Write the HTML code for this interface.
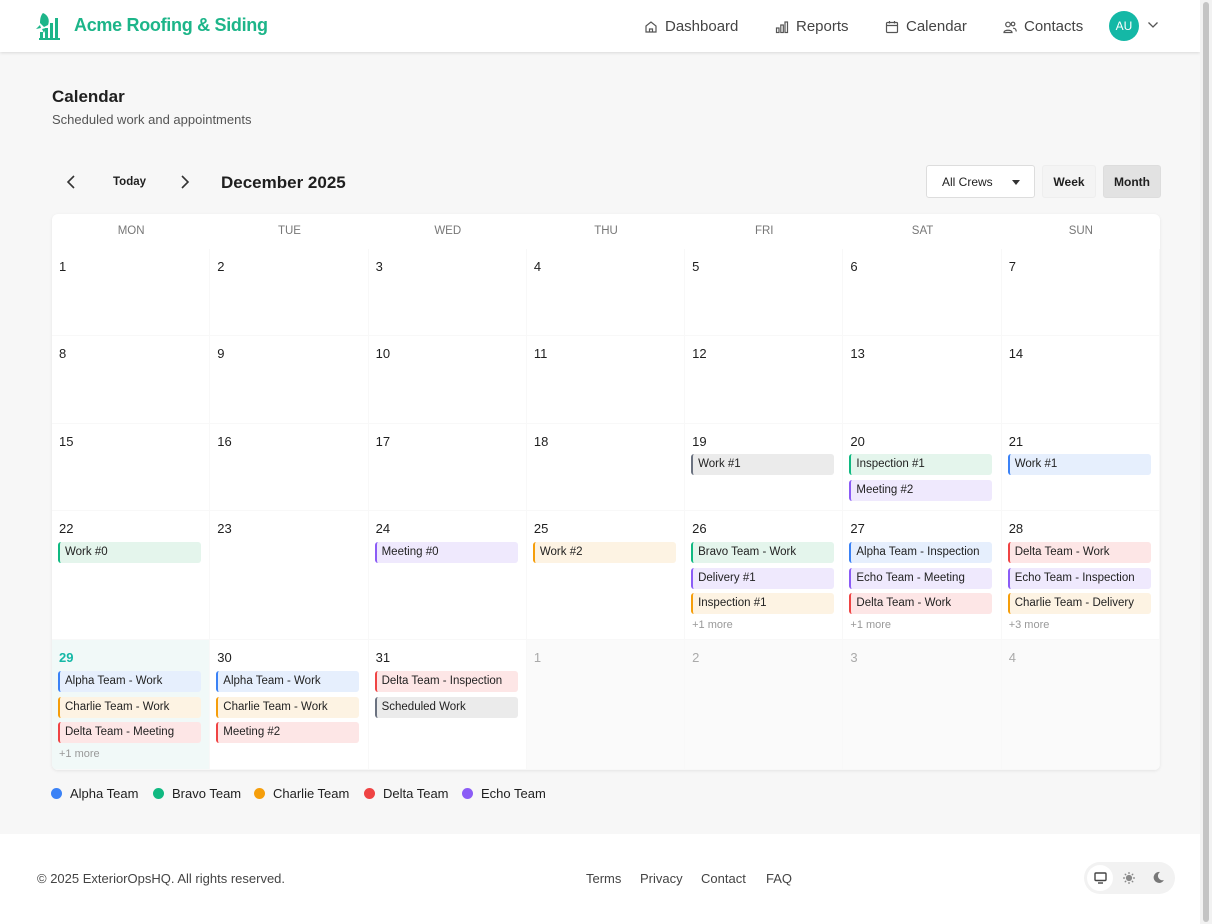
<!DOCTYPE html>
<html><head><meta charset="utf-8"><style>
*{box-sizing:border-box;margin:0;padding:0}
body{width:1212px;height:924px;overflow:hidden;background:#f7f7f7;font-family:"Liberation Sans",Arial,sans-serif;color:#1f1f1f;position:relative}
.nav{position:absolute;left:0;top:0;width:1200px;height:52px;background:#fff;box-shadow:0 1px 3px rgba(0,0,0,.12)}
.logo{position:absolute;left:33px;top:11px}
.brand{position:absolute;left:74px;top:15px;font-size:18px;font-weight:bold;color:#1db589;letter-spacing:-.3px}
.ni{position:absolute;top:18px;font-size:15px;color:#444;display:flex;align-items:center;gap:7px}
.av{position:absolute;left:1109px;top:11px;width:30px;height:30px;border-radius:50%;background:#14b8a6;color:#fff;font-size:12px;text-align:center;line-height:30px}
.scroll{position:absolute;right:0;top:0;width:12px;height:924px;background:#f2f2f2}
.scroll div{position:absolute;left:3px;top:2px;width:6px;height:920px;background:#c4c4c4;border-radius:3px}
h1{position:absolute;left:52px;top:87px;font-size:17px;font-weight:bold}
.sub{position:absolute;left:52px;top:112px;font-size:13px;color:#555}
.tb{position:absolute;font-size:12px;font-weight:bold}
.card{position:absolute;left:52px;top:214px;width:1108px;height:556px;background:#fff;border-radius:6px;box-shadow:0 1px 3px rgba(0,0,0,.08);overflow:hidden}
.hd{position:absolute;top:0;height:35px;width:158.3px;text-align:center;font-size:11.5px;color:#777;line-height:34px}
.cell{position:absolute;width:158.3px;border-right:1px solid #f8f8f8;border-bottom:1px solid #f8f8f8}
.dn{position:absolute;left:7px;top:10px;font-size:13px}
.ev{position:absolute;left:6px;width:143px;height:21px;border-radius:3px;border-left:2px solid;font-size:11.5px;line-height:21px;padding-left:5px;white-space:nowrap;color:#222}
.more{position:absolute;left:7px;font-size:11px;color:#999}
.b{background:#e6effd;border-color:#3b82f6}.g{background:#e4f5ec;border-color:#10b981}.o{background:#fdf3e3;border-color:#f59e0b}.r{background:#fde6e6;border-color:#ef4444}.p{background:#efe9fd;border-color:#8b5cf6}.k{background:#ebebeb;border-color:#6b7280}
.lg{position:absolute;top:786px;font-size:13px;display:flex;align-items:center;gap:8px}
.lg i{width:11px;height:11px;border-radius:50%;display:inline-block}
.foot{position:absolute;left:0;top:834px;width:1200px;height:90px;background:#fff}
.fl{position:absolute;top:871px;font-size:13px;color:#444}
</style></head><body>
<div class="nav">
<svg class="logo" width="30" height="30" viewBox="0 0 30 30"><path d="M10 2 C15 4 17 9 15 14 L11 16 L7 12 C7 7 8 4 10 2Z" fill="#1db589"/><path d="M7 14 L3 18 L8 17Z M13 17 L11 22 L9 18Z" fill="#1db589"/><rect x="12" y="17" width="3" height="11" fill="#1db589"/><rect x="17" y="12" width="3" height="16" fill="#1db589"/><rect x="22" y="7" width="3" height="21" fill="#1db589"/><rect x="6" y="27" width="21" height="2" fill="#1db589"/><rect x="7" y="21" width="3" height="7" fill="#1db589"/></svg>
<div class="brand">Acme Roofing &amp; Siding</div>
<div class="ni" style="left:644px"><svg width="14" height="14" viewBox="0 0 14 14" fill="none" stroke="#555" stroke-width="1.2"><path d="M2 6L7 2L12 6V12H2Z M5.5 12V9H8.5V12"/></svg>Dashboard</div>
<div class="ni" style="left:775px"><svg width="14" height="14" viewBox="0 0 14 14" fill="none" stroke="#555" stroke-width="1.2"><rect x="1.5" y="8" width="2.5" height="4.5"/><rect x="5.8" y="5" width="2.5" height="7.5"/><rect x="10" y="2" width="2.5" height="10.5"/></svg>Reports</div>
<div class="ni" style="left:885px"><svg width="14" height="14" viewBox="0 0 14 14" fill="none" stroke="#555" stroke-width="1.2"><rect x="1.5" y="2.5" width="11" height="10" rx="1"/><path d="M1.5 5.5H12.5M4.5 1V3.5M9.5 1V3.5"/></svg>Calendar</div>
<div class="ni" style="left:1003px"><svg width="14" height="14" viewBox="0 0 14 14" fill="none" stroke="#555" stroke-width="1.2"><circle cx="5" cy="4.5" r="2.3"/><path d="M1 12.5C1 9.5 9 9.5 9 12.5Z"/><circle cx="10" cy="4" r="1.8"/><path d="M10 8.2C12 8.2 13.2 9.5 13.2 11.5"/></svg>Contacts</div>
<div class="av">AU</div>
<svg style="position:absolute;left:1147px;top:21px" width="12" height="8" viewBox="0 0 12 8" fill="none" stroke="#555" stroke-width="1.3"><path d="M1.5 1.5L6 6L10.5 1.5"/></svg>
</div>
<div class="scroll"><div></div></div>
<h1>Calendar</h1>
<div class="sub">Scheduled work and appointments</div>
<svg style="position:absolute;left:66px;top:174px" width="10" height="16" viewBox="0 0 10 16" fill="none" stroke="#333" stroke-width="1.6"><path d="M8 2L2 8L8 14"/></svg>
<div class="tb" style="left:113px;top:176px;font-size:11.5px">Today</div>
<svg style="position:absolute;left:180px;top:174px" width="10" height="16" viewBox="0 0 10 16" fill="none" stroke="#333" stroke-width="1.6"><path d="M2 2L8 8L2 14"/></svg>
<div class="tb" style="left:221px;top:173px;font-size:17px">December 2025</div>
<div style="position:absolute;left:926px;top:165px;width:109px;height:33px;background:#fff;border:1px solid #ddd;border-radius:3px;font-size:12px;line-height:32px;padding-left:15px">All Crews<span style="position:absolute;right:14px;top:14px;border:4px solid transparent;border-top:5px solid #333"></span></div>
<div style="position:absolute;left:1042px;top:165px;width:54px;height:33px;background:#f4f4f4;border:1px solid #eee;border-radius:3px;font-size:12px;font-weight:bold;text-align:center;line-height:32px">Week</div>
<div style="position:absolute;left:1103px;top:165px;width:58px;height:33px;background:#e2e2e2;border:1px solid #ddd;border-radius:3px;font-size:12px;font-weight:bold;text-align:center;line-height:32px">Month</div>
<div class="card">
<div class="hd" style="left:0">MON</div><div class="hd" style="left:158.3px">TUE</div><div class="hd" style="left:316.6px">WED</div><div class="hd" style="left:474.9px">THU</div><div class="hd" style="left:633.1px">FRI</div><div class="hd" style="left:791.4px">SAT</div><div class="hd" style="left:949.7px">SUN</div>
<div class="cell" style="left:0;top:35px;height:87px"><div class="dn">1</div></div>
<div class="cell" style="left:158.3px;top:35px;height:87px"><div class="dn">2</div></div>
<div class="cell" style="left:316.6px;top:35px;height:87px"><div class="dn">3</div></div>
<div class="cell" style="left:474.9px;top:35px;height:87px"><div class="dn">4</div></div>
<div class="cell" style="left:633.1px;top:35px;height:87px"><div class="dn">5</div></div>
<div class="cell" style="left:791.4px;top:35px;height:87px"><div class="dn">6</div></div>
<div class="cell" style="left:949.7px;top:35px;height:87px"><div class="dn">7</div></div>
<div class="cell" style="left:0;top:122px;height:88px"><div class="dn">8</div></div>
<div class="cell" style="left:158.3px;top:122px;height:88px"><div class="dn">9</div></div>
<div class="cell" style="left:316.6px;top:122px;height:88px"><div class="dn">10</div></div>
<div class="cell" style="left:474.9px;top:122px;height:88px"><div class="dn">11</div></div>
<div class="cell" style="left:633.1px;top:122px;height:88px"><div class="dn">12</div></div>
<div class="cell" style="left:791.4px;top:122px;height:88px"><div class="dn">13</div></div>
<div class="cell" style="left:949.7px;top:122px;height:88px"><div class="dn">14</div></div>
<div class="cell" style="left:0;top:210px;height:87px"><div class="dn">15</div></div>
<div class="cell" style="left:158.3px;top:210px;height:87px"><div class="dn">16</div></div>
<div class="cell" style="left:316.6px;top:210px;height:87px"><div class="dn">17</div></div>
<div class="cell" style="left:474.9px;top:210px;height:87px"><div class="dn">18</div></div>
<div class="cell" style="left:633.1px;top:210px;height:87px"><div class="dn">19</div><div class="ev k" style="top:30px">Work #1</div></div>
<div class="cell" style="left:791.4px;top:210px;height:87px"><div class="dn">20</div><div class="ev g" style="top:30px">Inspection #1</div><div class="ev p" style="top:56px">Meeting #2</div></div>
<div class="cell" style="left:949.7px;top:210px;height:87px"><div class="dn">21</div><div class="ev b" style="top:30px">Work #1</div></div>
<div class="cell" style="left:0;top:297px;height:129px"><div class="dn">22</div><div class="ev g" style="top:31px">Work #0</div></div>
<div class="cell" style="left:158.3px;top:297px;height:129px"><div class="dn">23</div></div>
<div class="cell" style="left:316.6px;top:297px;height:129px"><div class="dn">24</div><div class="ev p" style="top:31px">Meeting #0</div></div>
<div class="cell" style="left:474.9px;top:297px;height:129px"><div class="dn">25</div><div class="ev o" style="top:31px">Work #2</div></div>
<div class="cell" style="left:633.1px;top:297px;height:129px"><div class="dn">26</div><div class="ev g" style="top:31px">Bravo Team - Work</div><div class="ev p" style="top:57px">Delivery #1</div><div class="ev o" style="top:82px">Inspection #1</div><div class="more" style="top:108px">+1 more</div></div>
<div class="cell" style="left:791.4px;top:297px;height:129px"><div class="dn">27</div><div class="ev b" style="top:31px">Alpha Team - Inspection</div><div class="ev p" style="top:57px">Echo Team - Meeting</div><div class="ev r" style="top:82px">Delta Team - Work</div><div class="more" style="top:108px">+1 more</div></div>
<div class="cell" style="left:949.7px;top:297px;height:129px"><div class="dn">28</div><div class="ev r" style="top:31px">Delta Team - Work</div><div class="ev p" style="top:57px">Echo Team - Inspection</div><div class="ev o" style="top:82px">Charlie Team - Delivery</div><div class="more" style="top:108px">+3 more</div></div>
<div class="cell" style="left:0;top:426px;height:130px;background:#f1f9f8"><div class="dn" style="color:#14b8a6;font-weight:bold">29</div><div class="ev b" style="top:31px">Alpha Team - Work</div><div class="ev o" style="top:57px">Charlie Team - Work</div><div class="ev r" style="top:82px">Delta Team - Meeting</div><div class="more" style="top:108px">+1 more</div></div>
<div class="cell" style="left:158.3px;top:426px;height:130px"><div class="dn">30</div><div class="ev b" style="top:31px">Alpha Team - Work</div><div class="ev o" style="top:57px">Charlie Team - Work</div><div class="ev r" style="top:82px">Meeting #2</div></div>
<div class="cell" style="left:316.6px;top:426px;height:130px"><div class="dn">31</div><div class="ev r" style="top:31px">Delta Team - Inspection</div><div class="ev k" style="top:57px">Scheduled Work</div></div>
<div class="cell" style="left:474.9px;top:426px;height:130px;background:#fafafa"><div class="dn" style="color:#aaa">1</div></div>
<div class="cell" style="left:633.1px;top:426px;height:130px;background:#fafafa"><div class="dn" style="color:#aaa">2</div></div>
<div class="cell" style="left:791.4px;top:426px;height:130px;background:#fafafa"><div class="dn" style="color:#aaa">3</div></div>
<div class="cell" style="left:949.7px;top:426px;height:130px;background:#fafafa"><div class="dn" style="color:#aaa">4</div></div>
</div>
<div class="lg" style="left:51px"><i style="background:#3b82f6"></i>Alpha Team</div>
<div class="lg" style="left:153px"><i style="background:#10b981"></i>Bravo Team</div>
<div class="lg" style="left:254px"><i style="background:#f59e0b"></i>Charlie Team</div>
<div class="lg" style="left:364px"><i style="background:#ef4444"></i>Delta Team</div>
<div class="lg" style="left:462px"><i style="background:#8b5cf6"></i>Echo Team</div>
<div class="foot"></div>
<div class="fl" style="left:37px">© 2025 ExteriorOpsHQ. All rights reserved.</div>
<div class="fl" style="left:586px">Terms</div>
<div class="fl" style="left:640px">Privacy</div>
<div class="fl" style="left:701px">Contact</div>
<div class="fl" style="left:766px">FAQ</div>
<div style="position:absolute;left:1084px;top:862px;width:91px;height:32px;border-radius:16px;background:#f2f2f2"></div>
<div style="position:absolute;left:1087px;top:865px;width:26px;height:26px;border-radius:13px;background:#fff"></div>
<svg style="position:absolute;left:1094px;top:872px" width="13" height="12" viewBox="0 0 13 12" fill="none" stroke="#444" stroke-width="1.4"><rect x="1" y="1" width="11" height="7.5" rx="1"/><path d="M4 11H9"/></svg>
<svg style="position:absolute;left:1122px;top:871px" width="14" height="14" viewBox="0 0 14 14" stroke="#888" stroke-width="1.2"><circle cx="7" cy="7" r="2.5" fill="#888"/><path d="M7 1V3M7 11V13M1 7H3M11 7H13M2.8 2.8L4.2 4.2M9.8 9.8L11.2 11.2M2.8 11.2L4.2 9.8M9.8 4.2L11.2 2.8"/></svg>
<svg style="position:absolute;left:1152px;top:871px" width="13" height="13" viewBox="0 0 13 13"><path d="M8 1A5.5 5.5 0 1 0 12 9A4.5 4.5 0 0 1 8 1Z" fill="#777"/></svg>
</body></html>
